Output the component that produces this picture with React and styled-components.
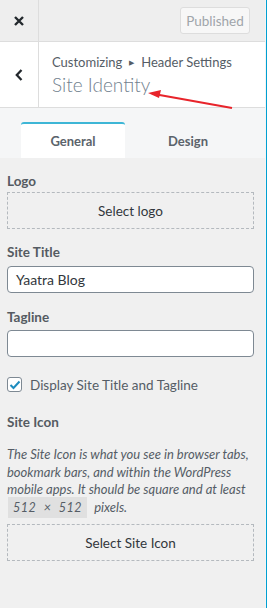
import React from 'react';
import styled, { createGlobalStyle } from 'styled-components';

const GlobalStyle = createGlobalStyle`
  html, body { margin: 0; padding: 0; background: #fff; }
  body { font-family: Lato, "Noto Sans", sans-serif; color: #32373c; }
  * { box-sizing: border-box; }
`;

const Frame = styled.div`
  display: flex;
  width: 267px;
  height: 608px;
  overflow: hidden;
`;

const Panel = styled.div`
  width: 265px;
  display: flex;
  flex-direction: column;
  background: #eeeeee;
  position: relative;
`;

const Edge = styled.div`
  width: 2px;
  border-left: 1px solid #f4f4f4;
  background: #00a0d2;
`;

const TopBar = styled.header`
  height: 42px;
  display: flex;
  align-items: center;
  background: #eeeeee;
  border-bottom: 1px solid #dddddd;
`;

const IconCell = styled.div`
  width: 39px;
  height: 100%;
  display: flex;
  align-items: center;
  justify-content: center;
  border-right: 1px solid #dddddd;
  color: #23282d;
  background: ${p => (p.$light ? '#fff' : 'transparent')};
`;

const PublishedBtn = styled.button`
  margin-left: auto;
  margin-right: 15px;
  height: 27px;
  width: 70px;
  padding: 0;
  border: 1px solid #dddddd;
  border-radius: 3px;
  background: #f7f7f7;
  color: #a0a5aa;
  font-family: Lato, sans-serif;
  font-size: 13.5px;
`;

const TitleBar = styled.div`
  height: 66px;
  display: flex;
  background: #fff;
  border-bottom: 1px solid #dddddd;
`;

const TitleText = styled.div`
  display: flex;
  flex-direction: column;
  padding: 12px 0 0 13px;
`;

const Crumb = styled.div`
  font-size: 13px;
  color: #555d66;
  line-height: 16px;
  span { font-size: 7px; margin: 0 7px; vertical-align: 2px; }
`;

const Heading = styled.div`
  font-size: 19px;
  font-weight: 300;
  color: #72818e;
  line-height: 28px;
  margin-top: 1px;
`;

const Arrow = styled.svg`
  position: absolute;
  left: 140px;
  top: 84px;
`;

const Tabs = styled.div`
  display: flex;
  padding: 14px 0 0 21px;
  background: #f5f6f7;
  height: 50px;
`;

const Tab = styled.div`
  width: 104px;
  display: flex;
  align-items: center;
  justify-content: center;
  font-size: 13px;
  font-weight: 700;
  color: #5b636b;
  border-top: 2px solid ${p => (p.$active ? '#3eb6d6' : 'transparent')};
  border-radius: 3px 3px 0 0;
  background: ${p => (p.$active ? '#fff' : 'transparent')};
  margin-right: 11px;
`;

const Body = styled.div`
  flex: 1;
  display: flex;
  flex-direction: column;
  padding: 14px 11px 0 7px;
  background: #f0f0f0;
`;

const Label = styled.div`
  font-size: 13.5px;
  font-weight: 700;
  color: #555b62;
  line-height: 18px;
  margin: ${p => p.$mt || 0}px 0 ${p => p.$mb || 0}px;
`;

const DashedBtn = styled.div`
  height: 37px;
  display: flex;
  align-items: center;
  justify-content: center;
  border: 1px dashed #b4b9be;
  font-size: 13.5px;
  color: #32373c;
`;

const Input = styled.div`
  height: 27px;
  border: 1px solid #7e8993;
  border-radius: 4px;
  background: #fff;
  padding: 0 8px;
  display: flex;
  align-items: center;
  font-size: 14px;
  color: #32373c;
`;

const CheckRow = styled.label`
  display: flex;
  align-items: center;
  gap: 8px;
  margin-top: 20px;
  height: 15px;
  font-size: 13.5px;
  color: #555d66;
`;

const Box = styled.span`
  width: 15px;
  height: 15px;
  border: 1px solid #7e8993;
  border-radius: 3px;
  background: #fff;
  display: flex;
  align-items: center;
  justify-content: center;
`;

const Desc = styled.p`
  margin: 0 0 8px;
  font-size: 13px;
  font-style: italic;
  line-height: 17.6px;
  color: #555d66;
`;

const Code = styled.code`
  font-family: Lato, sans-serif;
  font-size: 12.5px;
  font-style: italic;
  line-height: 1;
  letter-spacing: 0.5px;
  word-spacing: 4px;
  background: #e0e0e0;
  padding: 3px 5px 3px 5px;
  margin: 0 4px 0 1px;
`;

export default function App() {
  return (
    <>
      <GlobalStyle />
      <Frame>
        <Panel>
          <TopBar>
            <IconCell>
              <svg width="12" height="12" viewBox="0 0 12 12">
                <path d="M2 2 L10 10 M10 2 L2 10" stroke="#23282d" strokeWidth="2.4" />
              </svg>
            </IconCell>
            <PublishedBtn>Published</PublishedBtn>
          </TopBar>
          <TitleBar>
            <IconCell $light>
              <svg width="10" height="14" viewBox="0 0 10 14">
                <path d="M7.5 2 L2.8 7 L7.5 12" stroke="#23282d" strokeWidth="2.3" fill="none" />
              </svg>
            </IconCell>
            <TitleText>
              <Crumb>Customizing<span>▶</span>Header Settings</Crumb>
              <Heading>Site Identity</Heading>
            </TitleText>
          </TitleBar>
          <Arrow width="100" height="30" viewBox="0 0 100 30">
            <line x1="14" y1="10" x2="92" y2="24" stroke="#e8242b" strokeWidth="2.2" />
            <polygon points="8,9 21,6 19,14" fill="#e8242b" />
          </Arrow>
          <Tabs>
            <Tab $active>General</Tab>
            <Tab>Design</Tab>
          </Tabs>
          <Body>
            <Label $mb={2}>Logo</Label>
            <DashedBtn>Select logo</DashedBtn>
            <Label $mt={14} $mb={5}>Site Title</Label>
            <Input>Yaatra Blog</Input>
            <Label $mt={15} $mb={4}>Tagline</Label>
            <Input />
            <CheckRow>
              <Box>
                <svg width="12" height="10" viewBox="0 0 12 10">
                  <path d="M1.5 5 L4.5 8 L10.5 1.5" stroke="#1e8cbe" strokeWidth="2" fill="none" />
                </svg>
              </Box>
              Display Site Title and Tagline
            </CheckRow>
            <Label $mt={21} $mb={15}>Site Icon</Label>
            <Desc>
              The Site Icon is what you see in browser tabs, bookmark bars, and within the WordPress
              mobile apps. It should be square and at least <Code>512 × 512</Code> pixels.
            </Desc>
            <DashedBtn>Select Site Icon</DashedBtn>
          </Body>
        </Panel>
        <Edge />
      </Frame>
    </>
  );
}
